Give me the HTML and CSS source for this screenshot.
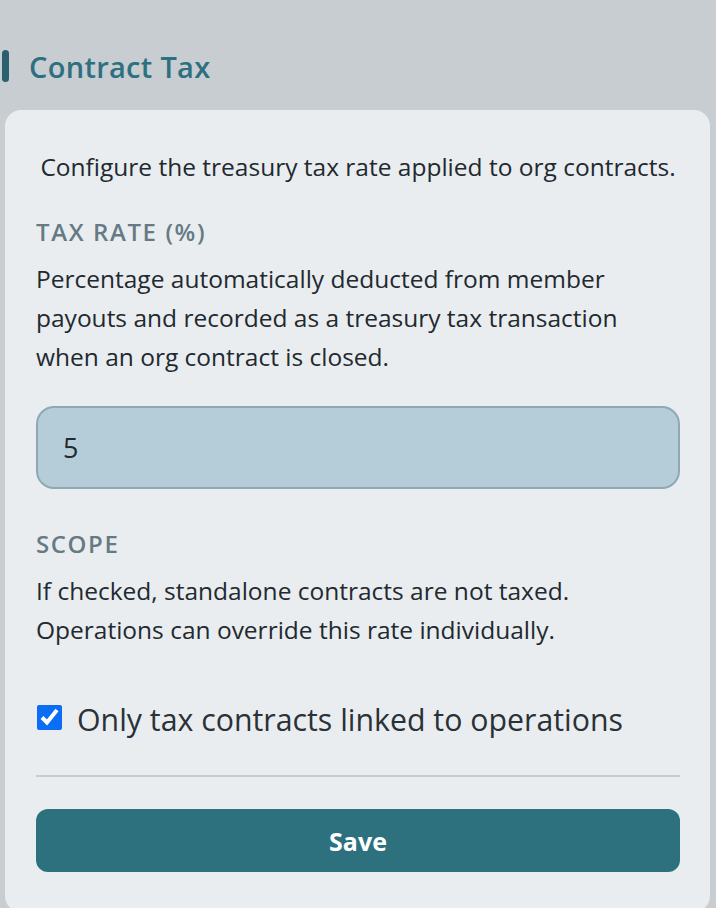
FILE: index.html
```html
<!DOCTYPE html>
<html lang="en">
<head>
  <meta charset="UTF-8">
  <meta name="viewport" content="width=device-width, initial-scale=1.0">
  <title>Contract Tax</title>
  <link rel="stylesheet" href="styles.css">
</head>
<body>
  <header class="section-head">
    <span class="accent-bar"></span>
    <h1>Contract Tax</h1>
  </header>

  <form class="settings-card">
    <p class="intro">Configure the treasury tax rate applied to org contracts.</p>

    <label class="field-label" for="tax-rate">Tax Rate (%)</label>
    <p class="field-help">Percentage automatically deducted from member payouts and recorded as a treasury tax transaction when an org contract is closed.</p>
    <input id="tax-rate" class="rate-input" type="text" value="5">

    <div class="field-label scope-label">Scope</div>
    <p class="field-help">If checked, standalone contracts are not taxed.<br>Operations can override this rate individually.</p>

    <label class="check-row">
      <input type="checkbox" checked>
      <span>Only tax contracts linked to operations</span>
    </label>

    <hr class="divider">

    <button type="button" class="save-btn">Save</button>
  </form>
</body>
</html>
```

FILE: styles.css
```css
body {
  margin: 0;
  background-color: #c8cdd1;
  font-family: "Open Sans", "Noto Sans", sans-serif;
  color: #22292f;
}
.section-head {
  display: flex;
  align-items: center;
  gap: 20px;
  height: 46px;
  padding: 43px 0 0 2px;
  margin-bottom: 21px;
}
.accent-bar {
  width: 7px;
  height: 32px;
  border-radius: 4px;
  background-color: #2a5f70;
}
.section-head h1 {
  margin: 0;
  font-size: 29px;
  font-weight: 600;
  letter-spacing: 0.3px;
  color: #2e6f80;
}
.settings-card {
  margin-left: 5px;
  width: 705px;
  box-sizing: border-box;
  padding: 42px 30px 40px 31px;
  background-color: #e9edf0;
  border-radius: 16px;
}
.intro {
  margin: 0 0 35px;
  text-align: center;
  font-size: 24.5px;
  line-height: 30px;
  white-space: nowrap;
}
.field-label {
  display: block;
  font-size: 24px;
  line-height: 30px;
  font-weight: 600;
  text-transform: uppercase;
  letter-spacing: 1.6px;
  color: #667a84;
}
.field-help {
  margin: 12px 0 0;
  font-size: 24.5px;
  line-height: 39px;
}
.rate-input {
  display: block;
  width: 100%;
  height: 83px;
  box-sizing: border-box;
  margin-top: 30px;
  padding: 0 25px;
  border: 2px solid #8fa9b4;
  border-radius: 18px;
  background-color: #b4cdd8;
  font-family: inherit;
  font-size: 27px;
  color: #22292f;
}
.scope-label {
  margin-top: 40px;
}
.check-row {
  display: flex;
  align-items: center;
  gap: 15px;
  height: 40px;
  margin-top: 48px;
  font-size: 30.3px;
  color: #2a3137;
}
.check-row span {
  line-height: 34px;
  padding-top: 6px;
}
.check-row input {
  width: 25px;
  height: 25px;
  margin: 0 0 0 1px;
  accent-color: #0b6cf5;
}
.divider {
  margin: 38px 0 0;
  border: none;
  border-top: 2px solid #c6ccd0;
}
.save-btn {
  display: block;
  width: 100%;
  height: 63px;
  margin-top: 32px;
  border: none;
  border-radius: 12px;
  background-color: #2d717f;
  color: #fff;
  font-family: inherit;
  font-size: 25px;
  font-weight: 700;
}
```
